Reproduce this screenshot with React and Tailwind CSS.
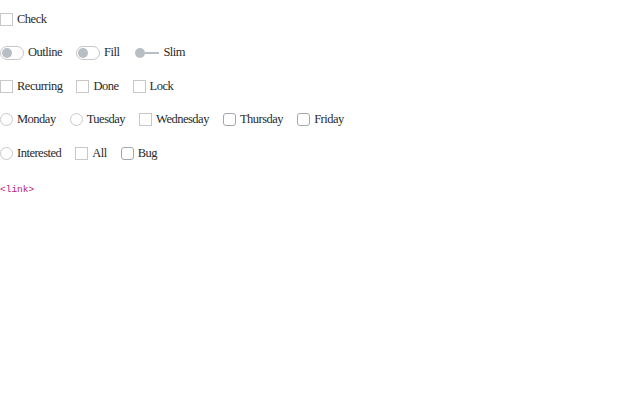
const Box = ({ rounded }) => (
  <span
    className={`inline-block w-[13px] h-[13px] border bg-white shrink-0 ${
      rounded ? "rounded-[3px] border-[#a3a8b0]" : "border-[#c8c8c8]"
    }`}
  />
);

const Radio = () => (
  <span className="inline-block w-[13px] h-[13px] rounded-full border border-[#c8c8c8] bg-white shrink-0" />
);

const Toggle = () => (
  <span className="inline-flex items-center w-[24px] h-[14px] rounded-full border border-[#c8c8c8] bg-white px-[1px] shrink-0">
    <span className="w-[10px] h-[10px] rounded-full bg-[#b8bec6]" />
  </span>
);

const Slim = () => (
  <span className="inline-flex items-center w-[24px] shrink-0">
    <span className="w-[10px] h-[10px] rounded-full bg-[#b8bec6]" />
    <span className="flex-1 h-[2px] bg-[#b8bec6]" />
  </span>
);

const Item = ({ control, label }) => (
  <label className="flex items-center gap-[4px]">
    {control}
    <span>{label}</span>
  </label>
);

export default function App() {
  return (
    <div className="bg-white min-h-screen text-[12.5px] tracking-[-0.5px] text-[#2a2a2a] font-['Liberation_Serif',serif]">
      <div className="flex flex-col gap-[17.6px] pt-[11px]">
        <div className="flex items-center gap-[14px] h-[16px]">
          <Item control={<Box />} label="Check" />
        </div>
        <div className="flex items-center gap-[14px] h-[16px]">
          <Item control={<Toggle />} label="Outline" />
          <Item control={<Toggle />} label="Fill" />
          <span className="ml-[2px]">
            <Item control={<Slim />} label="Slim" />
          </span>
        </div>
        <div className="flex items-center gap-[14px] h-[16px]">
          <Item control={<Box />} label="Recurring" />
          <Item control={<Box />} label="Done" />
          <Item control={<Box />} label="Lock" />
        </div>
        <div className="flex items-center gap-[14px] h-[16px]">
          <Item control={<Radio />} label="Monday" />
          <Item control={<Radio />} label="Tuesday" />
          <Item control={<Box />} label="Wednesday" />
          <Item control={<Box rounded />} label="Thursday" />
          <Item control={<Box rounded />} label="Friday" />
        </div>
        <div className="flex items-center gap-[14px] h-[16px]">
          <Item control={<Radio />} label="Interested" />
          <Item control={<Box />} label="All" />
          <Item control={<Box rounded />} label="Bug" />
        </div>
        <div className="h-[16px] flex items-center mt-[3px]">
          <code className="text-[9.5px] tracking-normal text-[#b8197c] font-['Liberation_Mono',monospace]">
            &lt;link&gt;
          </code>
        </div>
      </div>
    </div>
  );
}
